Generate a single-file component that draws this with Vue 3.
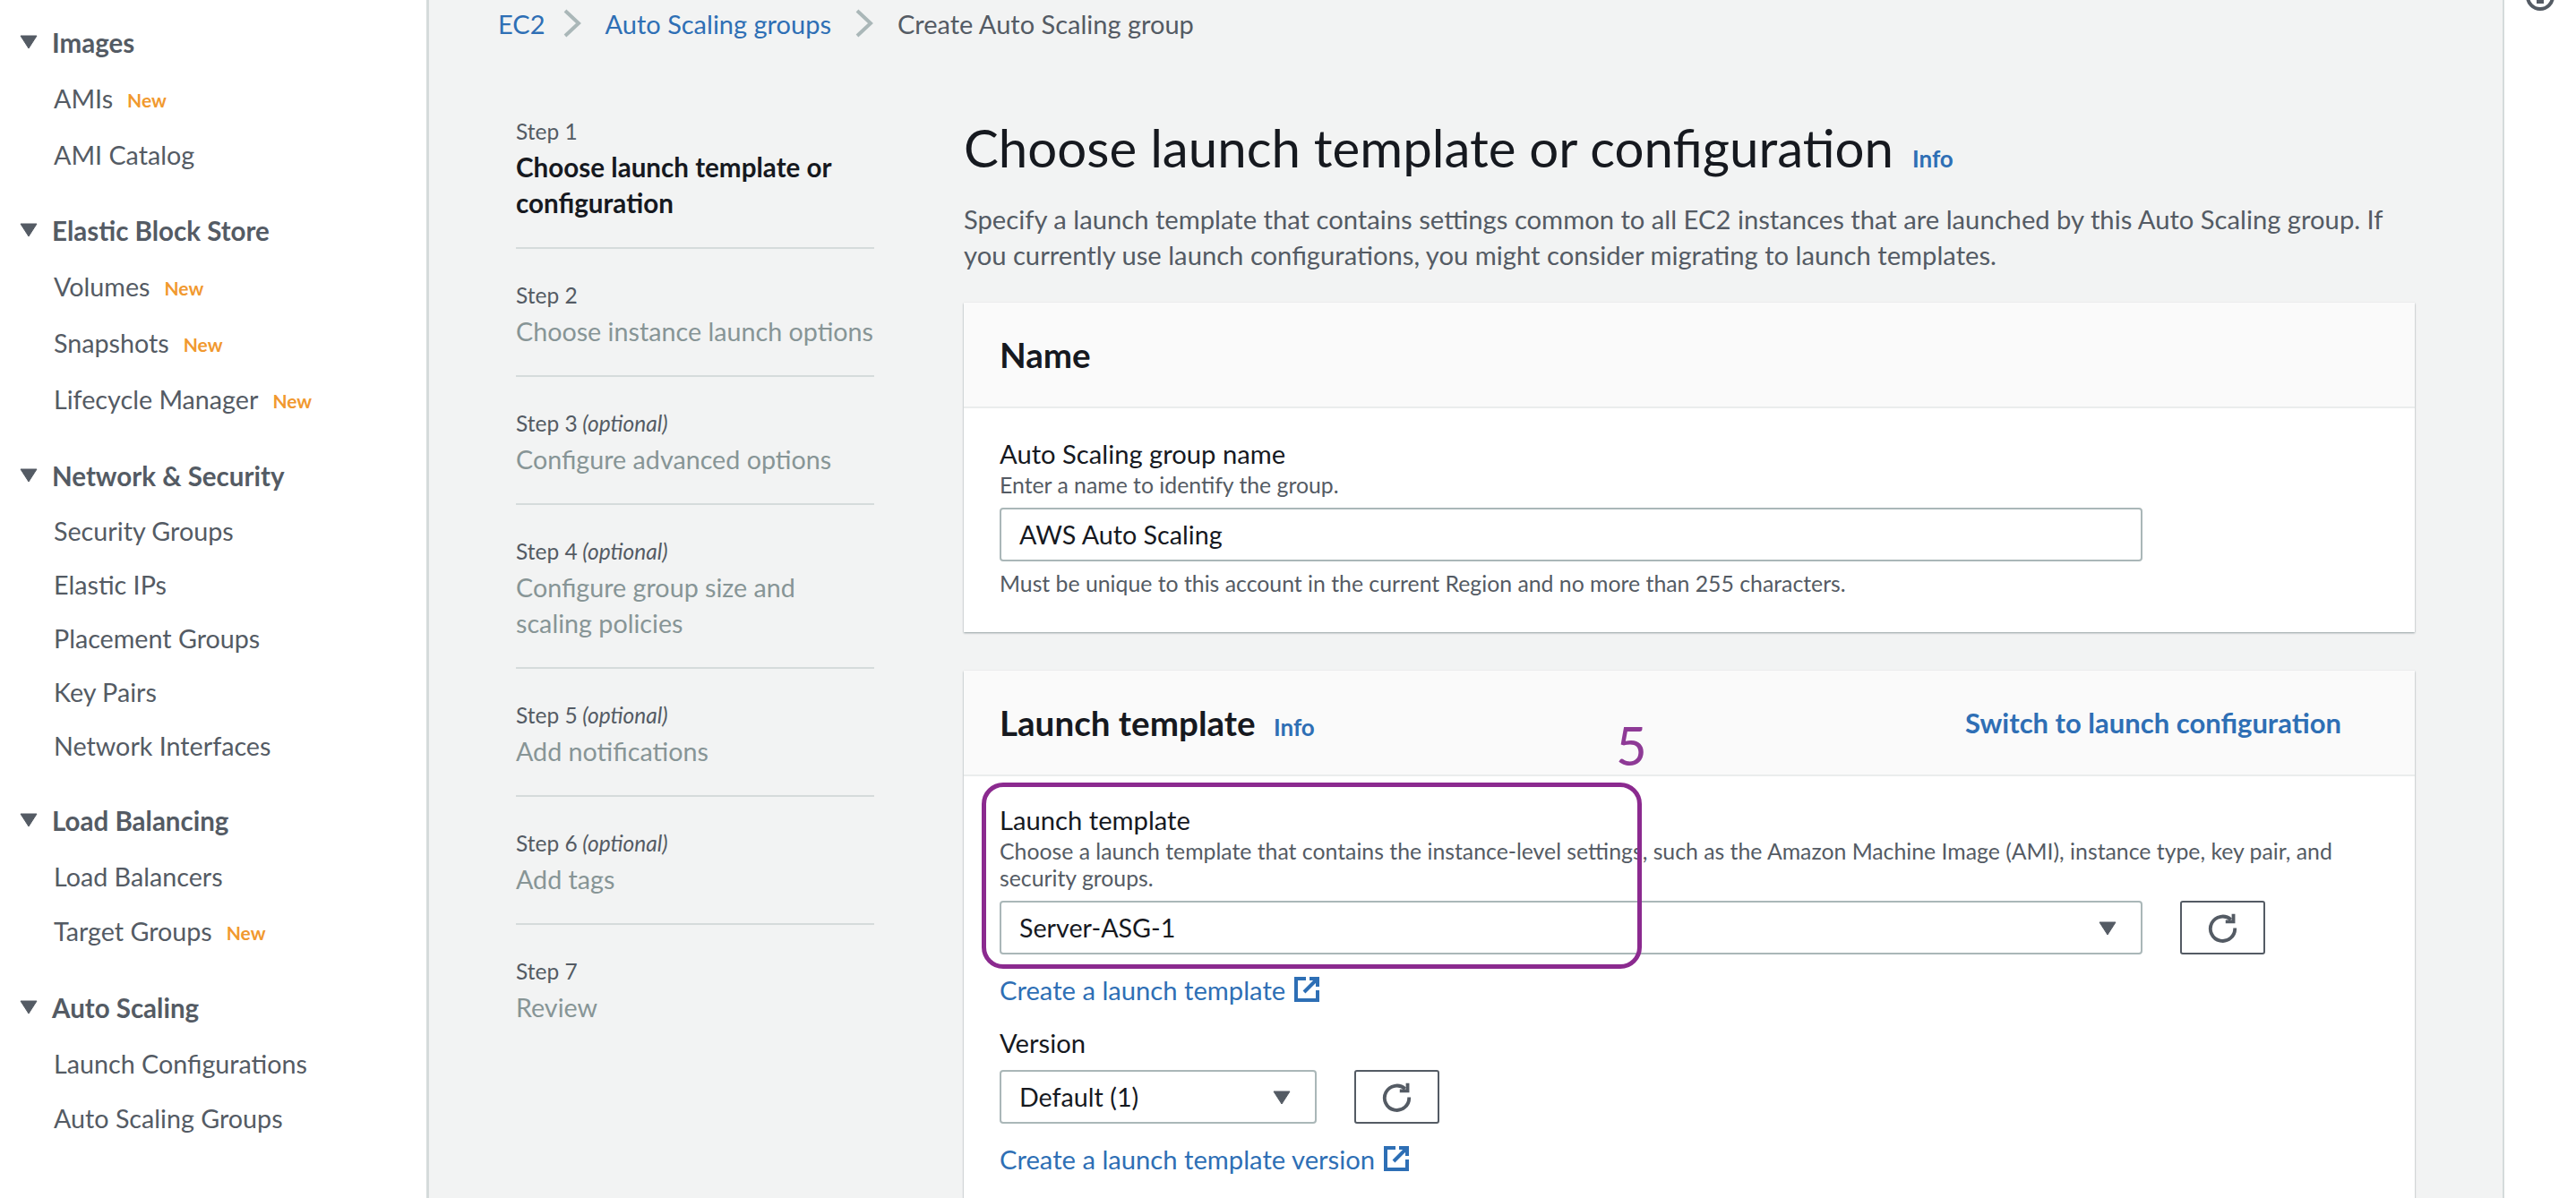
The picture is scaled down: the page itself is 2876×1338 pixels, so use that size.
<template>
  <div class="page">
    <aside class="sidebar">
      <section v-for="group in nav" :key="group.title" class="nav-group" :class="group.density">
        <h3 class="nav-title">
          <svg class="nav-caret" viewBox="0 0 20 16"><path d="M1 1h18L10 15z" /></svg>
          {{ group.title }}
        </h3>
        <div v-for="item in group.items" :key="item.label" class="nav-item">
          {{ item.label }}<span v-if="item.isNew" class="new">New</span>
        </div>
      </section>
    </aside>

    <main class="main">
      <nav class="crumbs">
        <a>EC2</a>
        <svg class="crumb-sep" viewBox="0 0 20 32"><path d="M2 2l15 14L2 30" /></svg>
        <a>Auto Scaling groups</a>
        <svg class="crumb-sep" viewBox="0 0 20 32"><path d="M2 2l15 14L2 30" /></svg>
        <span>Create Auto Scaling group</span>
      </nav>

      <div class="wizard">
        <ol class="steps">
          <li v-for="(step, i) in steps" :key="step.name" class="step">
            <div class="step-no">Step {{ i + 1 }}<em v-if="step.optional"> (optional)</em></div>
            <div class="step-name" :class="{ active: i === 0 }">{{ step.name }}</div>
          </li>
        </ol>

        <div class="content">
          <h1 class="title">Choose launch template or configuration <a class="info">Info</a></h1>
          <p class="lead">
            Specify a launch template that contains settings common to all EC2 instances that are launched by this Auto Scaling group. If you currently use launch configurations, you might consider migrating to launch templates.
          </p>

          <section class="card">
            <header class="card-head"><h2>Name</h2></header>
            <div class="card-body name-body">
              <label class="label">Auto Scaling group name</label>
              <div class="desc">Enter a name to identify the group.</div>
              <div class="field wide">AWS Auto Scaling</div>
              <div class="hint">Must be unique to this account in the current Region and no more than 255 characters.</div>
            </div>
          </section>

          <section class="card template-card">
            <header class="card-head">
              <h2>Launch template <a class="info">Info</a></h2>
              <a class="switch">Switch to launch configuration</a>
            </header>
            <div class="card-body">
              <label class="label">Launch template</label>
              <div class="desc two-line">Choose a launch template that contains the instance-level settings, such as the Amazon Machine Image (AMI), instance type, key pair, and security groups.</div>
              <div class="select-row">
                <div class="field wide select">
                  Server-ASG-1
                  <svg class="select-caret" viewBox="0 0 20 16"><path d="M1 1h18L10 15z" /></svg>
                </div>
                <button class="refresh">
                  <svg viewBox="0 0 32 32"><path d="M24.5 7.5A12.5 12.5 0 1 0 28.5 16" /><path d="M27 1.5V9.5H19" /></svg>
                </button>
              </div>
              <a class="ext-link">
                Create a launch template
                <svg viewBox="0 0 28 28"><path d="M13 2H2V26H26V15" /><path d="M11 17L25 3M17 2H26V11" /></svg>
              </a>
              <label class="label version-label">Version</label>
              <div class="select-row">
                <div class="field narrow select">
                  Default (1)
                  <svg class="select-caret" viewBox="0 0 20 16"><path d="M1 1h18L10 15z" /></svg>
                </div>
                <button class="refresh">
                  <svg viewBox="0 0 32 32"><path d="M24.5 7.5A12.5 12.5 0 1 0 28.5 16" /><path d="M27 1.5V9.5H19" /></svg>
                </button>
              </div>
              <a class="ext-link">
                Create a launch template version
                <svg viewBox="0 0 28 28"><path d="M13 2H2V26H26V15" /><path d="M11 17L25 3M17 2H26V11" /></svg>
              </a>
            </div>
          </section>

          <!-- callout drawn over the form -->
          <div class="callout-no">5</div>
          <div class="callout-box"></div>
        </div>
      </div>
    </main>

    <aside class="tools">
      <svg viewBox="0 19 34 12"><circle cx="17" cy="15" r="14" /><rect x="13" y="15" width="8" height="8" /></svg>
    </aside>
  </div>
</template>

<script setup>
const nav = [
  { title: 'Images', density: 'loose', items: [{ label: 'AMIs', isNew: true }, { label: 'AMI Catalog' }] },
  {
    title: 'Elastic Block Store',
    density: 'loose',
    items: [
      { label: 'Volumes', isNew: true },
      { label: 'Snapshots', isNew: true },
      { label: 'Lifecycle Manager', isNew: true }
    ]
  },
  {
    title: 'Network & Security',
    density: 'tight',
    items: [
      { label: 'Security Groups' },
      { label: 'Elastic IPs' },
      { label: 'Placement Groups' },
      { label: 'Key Pairs' },
      { label: 'Network Interfaces' }
    ]
  },
  {
    title: 'Load Balancing',
    density: 'mid',
    items: [{ label: 'Load Balancers' }, { label: 'Target Groups', isNew: true }]
  },
  {
    title: 'Auto Scaling',
    density: 'mid',
    items: [{ label: 'Launch Configurations' }, { label: 'Auto Scaling Groups' }]
  }
]

const steps = [
  { name: 'Choose launch template or configuration' },
  { name: 'Choose instance launch options' },
  { name: 'Configure advanced options', optional: true },
  { name: 'Configure group size and scaling policies', optional: true },
  { name: 'Add notifications', optional: true },
  { name: 'Add tags', optional: true },
  { name: 'Review' }
]
</script>

<style>
html, body {
  margin: 0;
  background: #f2f3f3;
}
</style>

<style scoped>
* {
  box-sizing: border-box;
}

.page {
  display: flex;
  width: 2876px;
  height: 1338px;
  overflow: hidden;
  font-family: "Lato", "Noto Sans", sans-serif;
  font-size: 28.7px;
  color: #16191f;
  background: #f2f3f3;
}

/* left nav */
.sidebar {
  flex: 0 0 479px;
  padding: 18px 0 0 22px;
  background: #fff;
  border-right: 3px solid #d5dbdb;
  color: #545b64;
}

.nav-group {
  margin-bottom: 23px;
}

.nav-group.loose {
  margin-bottom: 24px;
}

.nav-group.mid {
  margin-bottom: 25px;
}

.nav-title {
  display: flex;
  align-items: center;
  height: 62px;
  padding-bottom: 2px;
  margin: 0;
  font-size: 29.5px;
  font-weight: 700;
}

.loose .nav-title {
  height: 60px;
}

.nav-caret {
  width: 20px;
  height: 16px;
  margin-right: 16px;
  fill: #545b64;
  stroke: #545b64;
  stroke-linejoin: round;
}

.nav-item {
  display: flex;
  align-items: center;
  padding-left: 38px;
  white-space: nowrap;
}

.loose .nav-item { height: 63px; }
.mid .nav-item { height: 61px; }
.tight .nav-item { height: 60px; }

.new {
  margin: 3px 0 0 16px;
  font-size: 21px;
  font-weight: 700;
  color: #f1992f;
}

/* main column */
.main {
  flex: 1;
  min-width: 0;
  padding-left: 77px;
}

.crumbs {
  display: flex;
  align-items: center;
  height: 52px;
  font-size: 29px;
  color: #545b64;
}

.crumbs a {
  color: #2e6fb5;
}

.crumbs a:first-child {
  margin-right: -7px;
}

.crumb-sep {
  width: 20px;
  height: 32px;
  margin: 0 27px;
  fill: none;
  stroke: #aab7b8;
  stroke-width: 4;
}

.wizard {
  display: flex;
  margin-top: 75px;
}

.steps {
  flex: 0 0 400px;
  margin: 0 0 0 20px;
  padding: 0;
  list-style: none;
}

.step {
  padding-bottom: 29px;
  margin-bottom: 32px;
  border-bottom: 2px solid #d5dbdb;
}

.step:last-child {
  border-bottom: 0;
}

.step-no {
  height: 40px;
  line-height: 40px;
  font-size: 24.5px;
  color: #545b64;
}

.step-name {
  line-height: 40px;
  color: #879596;
}

.step-name.active {
  font-size: 29.6px;
  font-weight: 700;
  color: #16191f;
}

.content {
  position: relative;
  flex: 0 0 1620px;
  margin-left: 100px;
}

.title {
  margin: -2px 0 0;
  font-size: 58.2px;
  font-weight: 400;
  line-height: 80px;
  white-space: nowrap;
}

.info {
  margin-left: 6px;
  font-size: 26px;
  font-weight: 700;
  color: #2e6fb5;
}

.lead {
  width: 1600px;
  margin: 8px 0 33px;
  font-size: 29.2px;
  line-height: 40px;
  color: #545b64;
}

.card {
  background: #fff;
  box-shadow: 0 1px 2px rgba(0, 28, 36, 0.4);
}

.template-card {
  margin-top: 43px;
}

.card-head {
  display: flex;
  align-items: center;
  justify-content: space-between;
  height: 118px;
  padding: 0 82px 0 40px;
  background: #fafafa;
  border-bottom: 2px solid #eaeded;
}

.card-head h2 {
  margin: 0;
  font-size: 38.6px;
  font-weight: 700;
}

.card-head .info {
  margin-left: 11px;
}

.switch {
  font-size: 31px;
  font-weight: 700;
  color: #2e6fb5;
}

.card-body {
  padding: 29px 40px 28px;
}

.name-body {
  padding-top: 31px;
  padding-bottom: 39px;
}

.label {
  display: block;
  font-size: 29.2px;
  line-height: 40px;
}

.desc,
.hint {
  font-size: 24.8px;
  line-height: 30px;
  color: #545b64;
}

.desc.two-line {
  width: 1510px;
}

.hint {
  margin-top: 10px;
}

.field {
  display: flex;
  align-items: center;
  height: 60px;
  padding: 0 20px;
  background: #fff;
  border: 2px solid #aab7b8;
  border-radius: 4px;
}

.desc + .field {
  margin-top: 10px;
}

.wide {
  width: 1276px;
}

.narrow {
  width: 354px;
}

.select {
  position: relative;
}

.select-caret {
  position: absolute;
  right: 27px;
  top: 21px;
  width: 20px;
  height: 16px;
  fill: #545b64;
  stroke: #545b64;
  stroke-linejoin: round;
}

.select-row {
  display: flex;
  gap: 42px;
  margin-top: 10px;
}

.refresh {
  display: flex;
  align-items: center;
  justify-content: center;
  width: 95px;
  height: 60px;
  padding: 0;
  background: #fff;
  border: 2px solid #545b64;
  border-radius: 3px;
}

.refresh svg {
  width: 35px;
  height: 35px;
  fill: none;
  stroke: #545b64;
  stroke-width: 3.5;
}

.ext-link {
  display: flex;
  align-items: center;
  gap: 10px;
  height: 40px;
  margin-top: 19px;
  font-size: 29.2px;
  color: #2e6fb5;
}

.ext-link svg {
  width: 28px;
  height: 28px;
  fill: none;
  stroke: #2e6fb5;
  stroke-width: 4;
}

.version-label {
  margin-top: 20px;
}

.callout-no {
  position: absolute;
  left: 728px;
  top: 665px;
  font-size: 60px;
  line-height: 80px;
  color: #8e3a96;
}

.callout-box {
  position: absolute;
  left: 20px;
  top: 747px;
  width: 737px;
  height: 208px;
  border: 5px solid #8b2a8f;
  border-radius: 24px;
}

/* right rail */
.tools {
  flex: 0 0 82px;
  background: #fff;
  border-left: 2px solid #d5dbdb;
}

.tools svg {
  display: block;
  width: 34px;
  height: 12px;
  margin: 0 auto;
  fill: #545b64;
}

.tools circle {
  fill: none;
  stroke: #545b64;
  stroke-width: 4;
}
</style>
